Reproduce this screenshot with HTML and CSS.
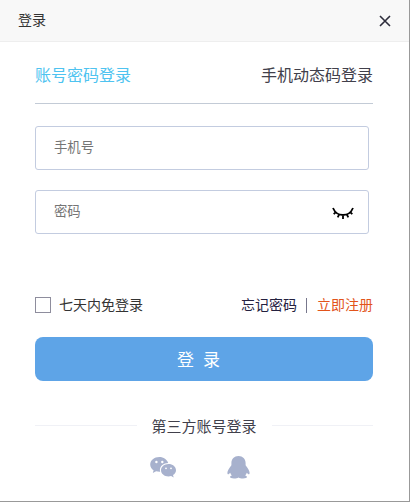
FILE: index.html
```html
<!DOCTYPE html>
<html lang="zh-CN">

<head>
    <meta charset="UTF-8">
    <meta name="viewport" content="width=device-width, initial-scale=1.0">
    <title>登录</title>
    <link rel="stylesheet" href="styles.css">
</head>

<body>
    <div class="login-box">
        <div class="login-title">
            <span>登录</span>
            <svg class="close" viewBox="0 0 12 12">
                <path d="M1 1L11 11M11 1L1 11" />
            </svg>
        </div>

        <form class="login-form">
            <div class="tabs">
                <span class="tab active">账号密码登录</span>
                <span class="tab">手机动态码登录</span>
            </div>

            <div class="field">
                <input type="text" name="phone" placeholder="手机号">
            </div>
            <div class="field">
                <input type="password" name="password" placeholder="密码">
                <svg class="eye" viewBox="0 0 22 13">
                    <path d="M1 1C3 5.800 6.500 8 11 8S19 5.800 21 1M4 5L1.700 7.200M7.200 7.400L5.700 10.400M11 8V12M14.800 7.400L16.300 10.400M18 5L20.300 7.200" />
                </svg>
            </div>

            <div class="options">
                <label class="remember">
                    <input type="checkbox" name="remember">
                    <span>七天内免登录</span>
                </label>
                <div class="links">
                    <a class="forget">忘记密码</a>
                    <i class="split"></i>
                    <a class="register">立即注册</a>
                </div>
            </div>

            <button type="button" class="submit">登录</button>

            <div class="third-title">第三方账号登录</div>
            <div class="third-icons">
                <svg class="wechat" viewBox="0 0 27 21">
                    <path d="M9.3 0C4.2 0 .2 3.3.2 7.4c0 2.4 1.3 4.4 3.4 5.8L2.8 16l3.3-1.7c1.1.3 2.2.5 3.5.5h.6c-.2-.6-.3-1.2-.3-1.8 0-3.9 3.7-6.9 8.3-6.9C17.300 2.600 13.600 0 9.300 0z" />
                    <path d="M26 13.200c0-3.500-3.400-6.200-7.500-6.200S11 9.800 11 13.200s3.300 6.200 7.500 6.200c.9 0 1.800-.1 2.600-.4l2.600 1.400-.7-2.300c1.800-1.200 3-2.900 3-4.900z" />
                    <g class="dots">
                        <circle cx="6.400" cy="5" r="1.200" />
                        <circle cx="12.300" cy="5" r="1.200" />
                        <circle cx="16" cy="11.300" r=".9" />
                        <circle cx="21" cy="11.300" r=".9" />
                    </g>
                </svg>
                <svg class="qq" viewBox="0 0 23 23">
                    <path d="M11.500 0C7.200 0 4.400 3 4.400 7v2.200C2 12.200.4 14.900.4 16.800c0 1 .3 1.500.8 1.500.6 0 1.400-.7 2-1.500.3 1.100.9 2 1.700 2.800-1.200.4-1.900.9-1.900 1.500 0 .9 1.500 1.300 4 1.300 2 0 3.500-.3 4.500-1 1 .7 2.500 1 4.500 1 2.500 0 4-.4 4-1.300 0-.6-.7-1.100-1.900-1.500.8-.8 1.400-1.700 1.700-2.800.6.8 1.400 1.500 2 1.500.5 0 .8-.5.8-1.500 0-1.900-1.600-4.600-4-7.600V7c0-4-2.800-7-7.100-7z" />
                </svg>
            </div>
        </form>
    </div>
</body>

</html>
```

FILE: styles.css
```css
* {
    box-sizing: border-box;
}

body {
    margin: 0;
    font-family: "Noto Sans CJK SC", sans-serif;
    font-size: 14px;
    color: #333;
    background-color: #fff;
}

.login-box {
    width: 410px;
    height: 502px;
    border-right: 1px solid #999;
    border-bottom: 1px solid #999;
    overflow: hidden;
}

.login-title {
    display: flex;
    justify-content: space-between;
    align-items: center;
    height: 42px;
    padding: 0 18px 4px;
    background-color: #f8f8f8;
    border-bottom: 1px solid #eee;
}

.close {
    width: 12px;
    height: 12px;
    margin-top: 5px;
    fill: none;
    stroke: #2e2d3c;
    stroke-width: 1.6;
}

.login-form {
    padding: 0 36px 0 35px;
}

.tabs {
    display: flex;
    justify-content: space-between;
    height: 62px;
    margin-bottom: 22px;
    border-bottom: 1px solid #c3cbd6;
    font-size: 16px;
    line-height: 64px;
}

.tab {
    color: #41404b;
}

.tab.active {
    color: #4ec3f0;
}

.field {
    display: flex;
    align-items: center;
    width: 334px;
    height: 44px;
    margin-bottom: 20px;
    padding: 0 14px 0 18px;
    border: 1px solid #c3cce0;
    border-radius: 3px;
}

.field input {
    flex: 1;
    min-width: 0;
    height: 40px;
    padding: 0 0 4px;
    border: none;
    outline: none;
    font-family: inherit;
    font-size: 13.333px;
}

.field input::placeholder {
    color: #757575;
}

.eye {
    width: 22px;
    height: 13px;
    margin-top: 2px;
    fill: none;
    stroke: #000;
    stroke-width: 1.8;
}

.options {
    display: flex;
    justify-content: space-between;
    align-items: flex-start;
    height: 20px;
    margin-top: 61px;
}

.remember,
.links {
    display: flex;
    align-items: center;
    height: 20px;
    line-height: 18px;
}

.remember span,
.links a {
    padding-bottom: 2px;
}

.remember input {
    appearance: none;
    width: 16px;
    height: 16px;
    margin: 0 8px 0 0;
    border: 1px solid #8e8d9d;
}

.forget {
    color: #24213f;
}

.split {
    width: 1px;
    height: 15px;
    margin: 0 10px 0 9px;
    background-color: #77778c;
}

.register {
    color: #e2541b;
}

.submit {
    display: block;
    width: 100%;
    height: 44px;
    margin-top: 22px;
    padding: 0 2px 2px 0;
    border: none;
    border-radius: 8px;
    background-color: #5ea4e7;
    color: #fff;
    font-family: inherit;
    font-size: 17px;
    letter-spacing: 9px;
}

.third-title {
    display: flex;
    align-items: center;
    gap: 15px;
    height: 22px;
    margin-top: 33px;
    font-size: 15px;
    color: #41404b;
}

.third-title::before,
.third-title::after {
    content: "";
    flex: 1;
    height: 1px;
    background-color: #f0f1f6;
}

.third-icons {
    display: flex;
    justify-content: center;
    align-items: center;
    gap: 50px;
    height: 24px;
    margin-top: 19px;
    padding-right: 9px;
    fill: #a7b1cd;
}

.wechat {
    width: 27px;
    height: 21px;
}

.wechat .dots {
    fill: #fff;
}

.qq {
    width: 23px;
    height: 23px;
}
```
